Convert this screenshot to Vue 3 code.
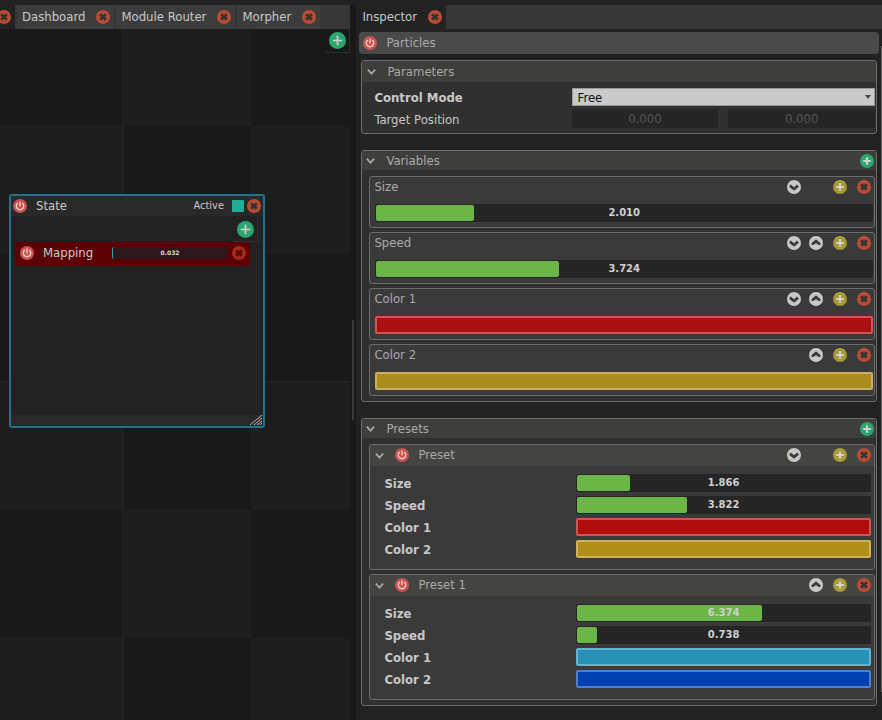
<script setup>
import { ref, h } from 'vue'

const icons = {
  plus: () => [h('circle', { cx: 10, cy: 10, r: 10 }), h('path', { d: 'M10 4.5V15.5M4.5 10H15.5', class: 'mark' })],
  close: () => [h('circle', { cx: 10, cy: 10, r: 10 }), h('path', { d: 'M6 6L14 14M14 6L6 14', class: 'mark' })],
  power: () => [
    h('circle', { cx: 10, cy: 10, r: 10 }),
    h('path', { d: 'M6.8 5.8A5.3 5.3 0 1 0 13.2 5.8M10 3.5V10.5', class: 'mark' }),
  ],
  down: () => [h('circle', { cx: 10, cy: 10, r: 10 }), h('path', { d: 'M4.2 8L10 12.8L15.8 8', class: 'mark' })],
  up: () => [h('circle', { cx: 10, cy: 10, r: 10 }), h('path', { d: 'M4.2 12.2L10 7.4L15.8 12.2', class: 'mark' })],
  fold: () => [h('path', { d: 'M2 6L10 15L18 6', class: 'mark' })],
}

const IconButton = (props) =>
  h('button', { type: 'button', class: ['icon', props.kind, props.tone], 'aria-label': props.label }, [
    h('svg', { viewBox: '0 0 20 20', 'aria-hidden': 'true' }, icons[props.kind]()),
  ])
IconButton.props = ['kind', 'tone', 'label']

const ColorField = (props) =>
  h('button', {
    type: 'button',
    class: 'color',
    'aria-label': props.label,
    style: { backgroundColor: props.fill, borderColor: props.edge },
  })
ColorField.props = ['fill', 'edge', 'label']

const fillWidth = (value) => ({ width: `calc(${value * 10}% - 2px)` })

const tabs = ['Dashboard', 'Module Router', 'Morpher']
const mode = ref('Free')
const active = ref(true)

const variables = ref([
  { name: 'Size', value: 2.01, down: true, up: false },
  { name: 'Speed', value: 3.724, down: true, up: true },
  { name: 'Color 1', fill: '#ab1012', edge: '#ca5656', down: true, up: true },
  { name: 'Color 2', fill: '#aa8c1e', edge: '#c9ae63', down: false, up: true },
])

const presets = ref([
  {
    name: 'Preset', down: true, up: false,
    rows: [
      { name: 'Size', value: 1.866 },
      { name: 'Speed', value: 3.822 },
      { name: 'Color 1', fill: '#b00d0c', edge: '#ca5656' },
      { name: 'Color 2', fill: '#b18f19', edge: '#cfb25c' },
    ],
  },
  {
    name: 'Preset 1', down: false, up: true,
    rows: [
      { name: 'Size', value: 6.374 },
      { name: 'Speed', value: 0.738 },
      { name: 'Color 1', fill: '#2991b5', edge: '#62b4d0' },
      { name: 'Color 2', fill: '#0040b5', edge: '#4e80cc' },
    ],
  },
])
</script>

<template>
  <main class="app">
    <section class="pane canvas-pane" aria-label="Morpher workspace">
      <nav class="tabs">
        <span class="tab cut"><IconButton kind="close" tone="red" label="Close tab" /></span>
        <span v-for="t in tabs" :key="t" class="tab">
          <a href="#">{{ t }}</a>
          <IconButton kind="close" tone="red" :label="`Close ${t}`" />
        </span>
      </nav>
      <div class="canvas">
        <div class="corner"><IconButton class="large" kind="plus" tone="green" label="Add item" /></div>
        <article class="node">
          <header class="node-head">
            <IconButton kind="power" tone="rose" label="Toggle state" />
            <h2>State</h2>
            <label for="active">Active</label>
            <input id="active" v-model="active" type="checkbox" />
            <IconButton kind="close" tone="red" label="Remove state" />
          </header>
          <div class="node-body">
            <div class="corner"><IconButton class="large" kind="plus" tone="green" label="Add mapping" /></div>
            <div class="mapping">
              <IconButton kind="power" tone="rose" label="Toggle mapping" />
              <span class="mapping-name">Mapping</span>
              <div class="meter">0.032</div>
              <IconButton kind="close" tone="dark" label="Remove mapping" />
            </div>
          </div>
          <footer class="node-foot">
            <svg class="grip" viewBox="0 0 12 10" aria-hidden="true">
              <path d="M0 10L12 0M4 10L12 3M7 10L12 6M10 10L12 8" />
            </svg>
          </footer>
        </article>
      </div>
    </section>

    <div class="divider"><i></i></div>

    <section class="pane inspector" aria-label="Inspector">
      <nav class="tabs">
        <span class="tab current">
          <a href="#">Inspector</a>
          <IconButton kind="close" tone="red" label="Close inspector" />
        </span>
      </nav>
      <div class="scroller">
        <div class="content">
          <header class="title">
            <IconButton kind="power" tone="rose" label="Toggle particles" />
            <h1>Particles</h1>
          </header>

          <section class="group">
            <header class="group-head tall">
              <IconButton kind="fold" tone="plain" label="Fold parameters" />
              <h2>Parameters</h2>
            </header>
            <div class="fields params">
              <div class="field">
                <label for="mode" class="strong">Control Mode</label>
                <div class="select">
                  <select id="mode" v-model="mode">
                    <option>Free</option>
                  </select>
                  <svg viewBox="0 0 6 4" aria-hidden="true"><path d="M0 0H6L3 4Z" /></svg>
                </div>
              </div>
              <div class="field">
                <label for="tx">Target Position</label>
                <div class="pair">
                  <input id="tx" type="text" value="0.000" disabled />
                  <input type="text" value="0.000" aria-label="Target position Y" disabled />
                </div>
              </div>
            </div>
          </section>

          <section class="group">
            <header class="group-head">
              <IconButton kind="fold" tone="plain" label="Fold variables" />
              <h2>Variables</h2>
              <IconButton kind="plus" tone="green" label="Add variable" />
            </header>
            <div class="cards">
              <article v-for="v in variables" :key="v.name" class="card">
                <header class="card-head">
                  <h3>{{ v.name }}</h3>
                  <div class="actions">
                    <span><IconButton v-if="v.down" kind="down" tone="white" label="Move down" /></span>
                    <span><IconButton v-if="v.up" kind="up" tone="white" label="Move up" /></span>
                    <IconButton kind="plus" tone="olive" label="Duplicate" />
                    <IconButton kind="close" tone="red" label="Remove" />
                  </div>
                </header>
                <ColorField v-if="v.fill" :fill="v.fill" :edge="v.edge" :label="v.name" />
                <div v-else class="slider">
                  <div class="fill" :style="fillWidth(v.value)"></div>
                  <output>{{ v.value.toFixed(3) }}</output>
                  <input v-model.number="v.value" type="range" min="0" max="10" step="0.001" :aria-label="v.name" />
                </div>
              </article>
            </div>
          </section>

          <section class="group">
            <header class="group-head">
              <IconButton kind="fold" tone="plain" label="Fold presets" />
              <h2>Presets</h2>
              <IconButton kind="plus" tone="green" label="Add preset" />
            </header>
            <div class="cards">
              <article v-for="p in presets" :key="p.name" class="card preset">
                <header class="card-head">
                  <IconButton kind="fold" tone="plain" :label="`Fold ${p.name}`" />
                  <IconButton kind="power" tone="rose" :label="`Toggle ${p.name}`" />
                  <h3>{{ p.name }}</h3>
                  <div class="actions">
                    <span><IconButton v-if="p.down" kind="down" tone="white" label="Move down" /></span>
                    <span><IconButton v-if="p.up" kind="up" tone="white" label="Move up" /></span>
                    <IconButton kind="plus" tone="olive" label="Duplicate" />
                    <IconButton kind="close" tone="red" label="Remove" />
                  </div>
                </header>
                <div class="fields">
                  <div v-for="r in p.rows" :key="r.name" class="field">
                    <span class="strong">{{ r.name }}</span>
                    <ColorField v-if="r.fill" :fill="r.fill" :edge="r.edge" :label="`${p.name} ${r.name}`" />
                    <div v-else class="slider">
                      <div class="fill" :style="fillWidth(r.value)"></div>
                      <output>{{ r.value.toFixed(3) }}</output>
                      <input v-model.number="r.value" type="range" min="0" max="10" step="0.001" :aria-label="`${p.name} ${r.name}`" />
                    </div>
                  </div>
                </div>
              </article>
            </div>
          </section>
        </div>
        <div class="scrollbar"><i></i></div>
      </div>
    </section>
  </main>
</template>

<style>
body {
  background: #222;
}
</style>

<style scoped>
.app {
  box-sizing: border-box;
  display: grid;
  grid-template-columns: 2fr 6px 3fr;
  min-height: 100vh;
  padding-top: 5px;
  overflow: hidden;
  background: #222;
  color: #c8c8c8;
  font: 13px/18px "DejaVu Sans Condensed", "DejaVu Sans", sans-serif;
}
.app * {
  box-sizing: border-box;
}
h1, h2, h3 {
  margin: 0;
  font: inherit;
}
.pane {
  display: flex;
  flex-direction: column;
  min-width: 0;
}

/* Icon buttons */
:deep(.icon) {
  display: block;
  flex: none;
  width: 14px;
  height: 14px;
  margin: 0;
  padding: 0;
  border: 0;
  background: none;
}
:deep(.icon.large) {
  width: 17px;
  height: 17px;
}
:deep(.icon svg) {
  display: block;
  width: 100%;
  height: 100%;
  overflow: visible;
}
:deep(.mark) {
  fill: none;
  stroke: #333;
  stroke-width: 3;
}
:deep(.red) { fill: #bb4b32; }
:deep(.red .mark) { stroke-width: 4; }
:deep(.dark) { fill: #a82a1c; }
:deep(.dark .mark) { stroke: #5a0808; stroke-width: 4; }
:deep(.green) { fill: #2aa76c; }
:deep(.green .mark) { stroke: #d0d0d0; }
:deep(.large .mark) { stroke-width: 2; }
:deep(.olive) { fill: #a89a35; }
:deep(.olive .mark) { stroke: #d0d0d0; }
:deep(.rose) { fill: #cb5353; }
:deep(.rose .mark) { stroke: #ecd0c4; stroke-width: 2; }
:deep(.white) { fill: #c8c8c8; }
:deep(.white .mark) { stroke: #3a3a3a; stroke-width: 4; }
:deep(.plain .mark) { stroke: #aaa; stroke-width: 4; }
:deep(.icon.fold) {
  width: 9px;
  height: 9px;
}

/* Tabs */
.tabs {
  display: flex;
  gap: 2px;
  height: 24px;
  background: #363636;
}
.tab {
  display: flex;
  align-items: center;
  gap: 11px;
  padding: 0 4px 0 5px;
  background: #3c3c3c;
}
.tab a {
  color: inherit;
  text-decoration: none;
}
.tab.cut {
  width: 15px;
  padding: 0 4px 0 0;
  background: #222;
  justify-content: flex-end;
}
.tab.current {
  padding-left: 6px;
  background: #222;
}

/* Workspace */
.canvas {
  position: relative;
  flex: 1;
  background:
    linear-gradient(#212121, #212121) 122px 0 / 2px 100% no-repeat,
    linear-gradient(#212121, #212121) 0 352px / 100% 2px no-repeat,
    conic-gradient(#1d1d1d 25%, #191919 0 50%, #1d1d1d 0 75%, #191919 0) -5px -31px / 256px 256px;
}
.corner {
  display: flex;
  align-items: center;
  justify-content: flex-end;
  width: 24px;
  height: 24px;
  margin-left: auto;
  padding-right: 3px;
  border: solid #303030;
  border-width: 0 1px 1px 0;
}
.node {
  position: absolute;
  left: 9px;
  top: 165px;
  display: flex;
  flex-direction: column;
  width: 256px;
  height: 234px;
  border: 2px solid #21728f;
  border-radius: 3px;
  background: #222;
}
.node-head {
  display: flex;
  align-items: center;
  height: 20px;
  padding: 0 2px 1px;
  background: #292929;
}
.node-head h2 {
  flex: 1;
  padding-left: 9px;
}
.node-head label {
  font-size: 11px;
}
.node-head input {
  appearance: none;
  width: 12px;
  height: 12px;
  margin: 0 3px 0 8px;
  border-radius: 1px;
  background: #164b46;
}
.node-head input:checked {
  background: #23ab98;
}
.node-body {
  flex: 1;
  padding: 2px 5px 0 4px;
}
.mapping {
  display: flex;
  align-items: center;
  height: 24px;
  margin-right: 8px;
  padding: 0 4px 2px 5px;
  border-radius: 4px;
  background: #5c0006;
}
.mapping-name {
  width: 78px;
  padding-left: 9px;
}
.meter {
  flex: 1;
  height: 12px;
  margin-right: 5px;
  border-left: 1px solid #23a5b5;
  border-radius: 2px;
  background: #2c171b;
  color: #ddd;
  font: bold 6px/12px "DejaVu Sans", sans-serif;
  text-align: center;
}
.node-foot {
  display: flex;
  align-items: flex-end;
  justify-content: flex-end;
  height: 11px;
  padding: 0 1px 1px 0;
  background: #292929;
}
.grip {
  width: 12px;
  height: 10px;
  stroke: #bbb;
  fill: none;
}
.divider {
  display: flex;
  align-items: center;
  background: #191919;
}
.divider i {
  width: 2px;
  height: 100px;
  margin-left: 2px;
  margin-top: 15px;
  background: #383838;
}

/* Inspector */
.scroller {
  display: grid;
  grid-template-columns: 1fr 2px;
  padding-top: 3px;
}
.content {
  display: flex;
  flex-direction: column;
  gap: 16px;
  padding: 0 3px 0 5px;
}
.title {
  display: flex;
  align-items: center;
  gap: 9px;
  height: 22px;
  margin: 0 -2px -10px;
  padding: 0 4px;
  border-radius: 4px;
  background: #4a4a4a;
  color: #aaa;
}
.scrollbar {
  display: flex;
  padding: 14px 0;
}
.scrollbar i {
  width: 1px;
  margin-left: 1px;
  background: #666;
}
.group {
  border: 1px solid #6c6c6c;
  border-radius: 3px;
  background: #303030;
}
.group-head {
  display: flex;
  align-items: center;
  height: 19px;
  padding: 0 2px 0 4px;
  background: #3e3e3b;
  color: #aaa;
}
.group-head h2 {
  flex: 1;
  padding-left: 11px;
}
.group-head.tall {
  height: 21px;
  padding-left: 5px;
}
.fields {
  display: grid;
  gap: 4px;
  padding: 8px 3px 11px 14px;
}
.params {
  padding: 6px 1px 5px 12px;
}
.field {
  display: grid;
  grid-template-columns: 13fr 20fr;
  height: 18px;
  align-items: center;
}
.field > label,
.field > span {
  padding-top: 2px;
  line-height: 16px;
}
.strong {
  font-weight: bold;
}
.select {
  position: relative;
}
.select svg {
  position: absolute;
  right: 4px;
  top: 7px;
  width: 6px;
  height: 4px;
  fill: #444;
  pointer-events: none;
}
select {
  display: block;
  appearance: none;
  width: 100%;
  height: 18px;
  padding: 0 5px;
  border: 1px solid #999;
  border-radius: 0;
  background: #cacaca;
  color: #111;
  font: inherit;
}
.pair {
  display: grid;
  grid-template-columns: 1fr 1fr;
  gap: 10px;
}
.pair input {
  width: 100%;
  min-width: 0;
  height: 18px;
  padding: 0;
  border: 0;
  background: #252525;
  color: #555;
  font: inherit;
  text-align: center;
}
.cards {
  display: grid;
  gap: 4px;
  padding: 6px 1px 5px 7px;
}
.card {
  border: 1px solid #6c6c6c;
  border-radius: 3px;
  background: #3a3a3a;
  padding: 0 1px 5px 5px;
}
.card-head {
  display: flex;
  align-items: center;
  height: 20px;
  margin-bottom: 7px;
  padding-right: 2px;
  color: #aaa;
}
.card-head h3 {
  flex: 1;
  margin-left: -1px;
}
.actions {
  display: flex;
  gap: 10px;
}
.actions span {
  width: 14px;
}
.actions span + span {
  margin-left: -2px;
}
.preset {
  padding: 0;
}
.preset .card-head {
  height: 21px;
  margin: 0;
  padding: 0 3px 1px 5px;
  background: #444441;
}
.preset .card-head h3 {
  padding-left: 10px;
}
.preset .card-head .rose {
  margin-left: 11px;
}
.slider {
  position: relative;
  height: 18px;
  border: 1px solid #252525;
  border-radius: 2px;
  background: #252525;
}
.slider .fill {
  height: 16px;
  border-radius: 2px;
  background: #6cb547;
}
.slider output {
  position: absolute;
  inset: 0;
  color: #d0d0d0;
  font: bold 10px/16px "DejaVu Sans", sans-serif;
  text-align: center;
}
.slider input {
  position: absolute;
  inset: 0;
  width: 100%;
  margin: 0;
  opacity: 0;
}
:deep(.color) {
  display: block;
  width: 100%;
  height: 18px;
  padding: 0;
  border: 2px solid;
  border-radius: 2px;
}
</style>
